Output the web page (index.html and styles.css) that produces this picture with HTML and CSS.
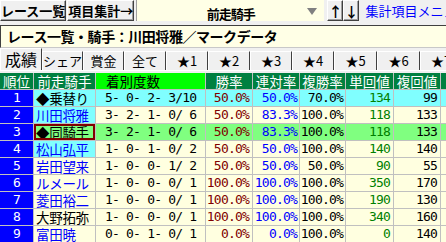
FILE: index.html
```html
<!DOCTYPE html>
<html lang="ja">
<head>
    <meta charset="UTF-8">
    <title>レース一覧・騎手</title>
    <link rel="stylesheet" href="styles.css">
</head>
<body>
    <div class="toolbar">
        <button class="btn btn-list">レース一覧</button>
        <button class="btn btn-sum">項目集計→</button>
        <div class="combo">
            <span class="combo-text">前走騎手</span>
            <span class="combo-arrow"></span>
        </div>
        <button class="btn btn-arrow btn-up">↑</button>
        <button class="btn btn-arrow">↓</button>
        <a class="menu-link">集計項目メニュー</a>
    </div>

    <div class="title">レース一覧・騎手：川田将雅／マークデータ</div>

    <div class="tabs">
        <div class="tab active w42">成績</div>
        <div class="tab w41">シェア</div>
        <div class="tab w41">賞金</div>
        <div class="tab w42">全て</div>
        <div class="tab w42">★1</div>
        <div class="tab w42">★2</div>
        <div class="tab w42">★3</div>
        <div class="tab w42">★4</div>
        <div class="tab w43">★5</div>
        <div class="tab w43">★6</div>
        <div class="tab w42">★7</div>
    </div>

    <div class="panel">
        <div class="table">
            <div class="row head">
                <div class="c">順位</div>
                <div class="c">前走騎手</div>
                <div class="c bright">着別度数</div>
                <div class="c">勝率</div>
                <div class="c">連対率</div>
                <div class="c">複勝率</div>
                <div class="c">単回値</div>
                <div class="c">複回値</div>
                <div class="c">単回値</div>
            </div>
            <div class="row row-cyan">
                <div class="c rank">1</div>
                <div class="c name">◆乗替り</div>
                <div class="c count">5- 0- 2- 3/10</div>
                <div class="c num win">50.0%</div>
                <div class="c num ren">50.0%</div>
                <div class="c num fuku">70.0%</div>
                <div class="c num tan">134</div>
                <div class="c num fkv">99</div>
                <div class="c"></div>
            </div>
            <div class="row">
                <div class="c rank">2</div>
                <div class="c name hl blue">川田将雅</div>
                <div class="c count">3- 2- 1- 0/ 6</div>
                <div class="c num win">50.0%</div>
                <div class="c num ren">83.3%</div>
                <div class="c num fuku">100.0%</div>
                <div class="c num tan">118</div>
                <div class="c num fkv">133</div>
                <div class="c"></div>
            </div>
            <div class="row row-green">
                <div class="c rank">3</div>
                <div class="c name sel">◆同騎手</div>
                <div class="c count">3- 2- 1- 0/ 6</div>
                <div class="c num win">50.0%</div>
                <div class="c num ren">83.3%</div>
                <div class="c num fuku">100.0%</div>
                <div class="c num tan">118</div>
                <div class="c num fkv">133</div>
                <div class="c"></div>
            </div>
            <div class="row">
                <div class="c rank">4</div>
                <div class="c name hl blue">松山弘平</div>
                <div class="c count">1- 0- 1- 0/ 2</div>
                <div class="c num win">50.0%</div>
                <div class="c num ren">50.0%</div>
                <div class="c num fuku">100.0%</div>
                <div class="c num tan">140</div>
                <div class="c num fkv">140</div>
                <div class="c"></div>
            </div>
            <div class="row">
                <div class="c rank">5</div>
                <div class="c name blue">岩田望来</div>
                <div class="c count">1- 0- 0- 1/ 2</div>
                <div class="c num win">50.0%</div>
                <div class="c num ren">50.0%</div>
                <div class="c num fuku">50.0%</div>
                <div class="c num tan">90</div>
                <div class="c num fkv">55</div>
                <div class="c"></div>
            </div>
            <div class="row">
                <div class="c rank">6</div>
                <div class="c name blue">ルメール</div>
                <div class="c count">1- 0- 0- 0/ 1</div>
                <div class="c num win">100.0%</div>
                <div class="c num ren">100.0%</div>
                <div class="c num fuku">100.0%</div>
                <div class="c num tan">350</div>
                <div class="c num fkv">170</div>
                <div class="c"></div>
            </div>
            <div class="row">
                <div class="c rank">7</div>
                <div class="c name blue">菱田裕二</div>
                <div class="c count">1- 0- 0- 0/ 1</div>
                <div class="c num win">100.0%</div>
                <div class="c num ren">100.0%</div>
                <div class="c num fuku">100.0%</div>
                <div class="c num tan">190</div>
                <div class="c num fkv">130</div>
                <div class="c"></div>
            </div>
            <div class="row">
                <div class="c rank">8</div>
                <div class="c name">大野拓弥</div>
                <div class="c count">1- 0- 0- 0/ 1</div>
                <div class="c num win">100.0%</div>
                <div class="c num ren">100.0%</div>
                <div class="c num fuku">100.0%</div>
                <div class="c num tan">340</div>
                <div class="c num fkv">160</div>
                <div class="c"></div>
            </div>
            <div class="row">
                <div class="c rank">9</div>
                <div class="c name blue">富田暁</div>
                <div class="c count">0- 0- 1- 0/ 1</div>
                <div class="c num win">0.0%</div>
                <div class="c num ren">0.0%</div>
                <div class="c num fuku">100.0%</div>
                <div class="c num tan">0</div>
                <div class="c num fkv">140</div>
                <div class="c"></div>
            </div>
        </div>
    </div>
</body>
</html>
```
FILE: styles.css
```css
:root {
    --face: #f0f0f0;
    --cream: #ffffe6;
    --row: #ffffe0;
    --cyan: #80ffff;
    --green-row: #80ff80;
    --head: #008040;
    --grid: #c0c0c0;
    --rank: #0000ff;
}

* {
    margin: 0;
    padding: 0;
    box-sizing: border-box;
}

body {
    width: 446px;
    height: 242px;
    overflow: hidden;
    background: var(--face);
    font-family: "Noto Sans CJK JP", sans-serif;
    color: #000;
}

/* toolbar */
.toolbar {
    display: flex;
    height: 21px;
}

.btn {
    font-family: inherit;
    font-weight: bold;
    font-size: 13px;
    line-height: 19px;
    padding: 0;
    background: var(--face);
    color: #000;
    border: 1px solid;
    border-color: #fff #404040 #404040 #fff;
    box-shadow: inset -1px -1px #a0a0a0;
    white-space: nowrap;
}

.btn-list {
    width: 75px;
}

.btn-sum {
    width: 79px;
    margin-left: 1px;
}

.combo {
    position: relative;
    flex: none;
    width: 188px;
    margin-left: 2px;
    background: var(--cream);
    border-left: 1px solid #a0a0a0;
    text-align: center;
}

.combo-text {
    font-weight: bold;
    font-size: 13px;
    letter-spacing: -1px;
    line-height: 21px;
}

.combo-arrow {
    position: absolute;
    right: 7px;
    top: 8px;
    border-left: 5px solid transparent;
    border-right: 5px solid transparent;
    border-top: 7px solid #808080;
}

.btn-arrow {
    flex: none;
    width: 16px;
    font-size: 14px;
    line-height: 18px;
}

.btn-up {
    margin-left: 3px;
}

.menu-link {
    margin-left: 6px;
    color: #0000ff;
    font-size: 13px;
    line-height: 21px;
    white-space: nowrap;
}

/* title */
.title {
    margin-top: 4px;
    height: 23px;
    background: var(--cream);
    border-top: 1px solid #404040;
    border-left: 1px solid #404040;
    border-bottom: 1px solid #c8c8c8;
    padding-left: 6px;
    font-weight: bold;
    font-size: 14px;
    line-height: 21px;
    letter-spacing: -0.45px;
    white-space: nowrap;
}

/* tabs */
.tabs {
    display: flex;
    align-items: flex-end;
    height: 23px;
    border-bottom: 1px solid #fff;
}

.tab {
    flex: none;
    height: 19px;
    font-size: 13px;
    line-height: 18px;
    text-align: center;
    border-top: 1px solid #fff;
    border-left: 1px solid #fff;
    border-right: 1px solid #404040;
    white-space: nowrap;
}

.tab.active {
    height: 22px;
    font-size: 16px;
    line-height: 21px;
}

.w41 { width: 41px; }
.w42 { width: 42px; }
.w43 { width: 43px; }

/* table */
.panel {
    padding-top: 2px;
}

.table {
    display: flex;
    flex-direction: column;
    gap: 1px;
    width: 501px;
    background: var(--grid);
}

.row {
    display: grid;
    grid-template-columns: 33px 61px 109px 46px 46px 45px 47px 46px 60px;
    grid-auto-rows: 16px;
    gap: 1px;
}

.c {
    background: var(--row);
    font-size: 14px;
    line-height: 16px;
    white-space: pre;
    overflow: hidden;
}

.head .c {
    background: var(--head);
    color: #fff;
    text-align: center;
    font-size: 13.5px;
}

.head .c.bright {
    background: #00ff00;
    color: #000;
    text-align: left;
    padding-left: 10px;
}

.row-cyan .c { background: var(--cyan); }
.row-green .c { background: var(--green-row); }

.row .c.rank {
    background: var(--rank);
    color: #fff;
    text-align: center;
    font-family: "DejaVu Sans Mono", monospace;
    font-size: 13px;
    letter-spacing: -0.8px;
}

.name {
    padding-left: 2px;
    font-size: 13.5px;
    letter-spacing: -0.3px;
}

.row .name.hl { background: var(--cyan); }
.name.blue { color: #0000ff; }

.name.sel {
    outline: 2px solid #800000;
    outline-offset: -2px;
}

.count,
.num {
    font-family: "DejaVu Sans Mono", monospace;
    font-size: 13px;
    letter-spacing: -0.8px;
}

.count {
    padding-left: 9px;
}

.num {
    text-align: right;
    padding-right: 3px;
}

.win { color: #800000; }
.ren { color: #0000ff; padding-right: 2px; }
.fuku { padding-right: 2px; }
.tan { color: #008000; }
```
